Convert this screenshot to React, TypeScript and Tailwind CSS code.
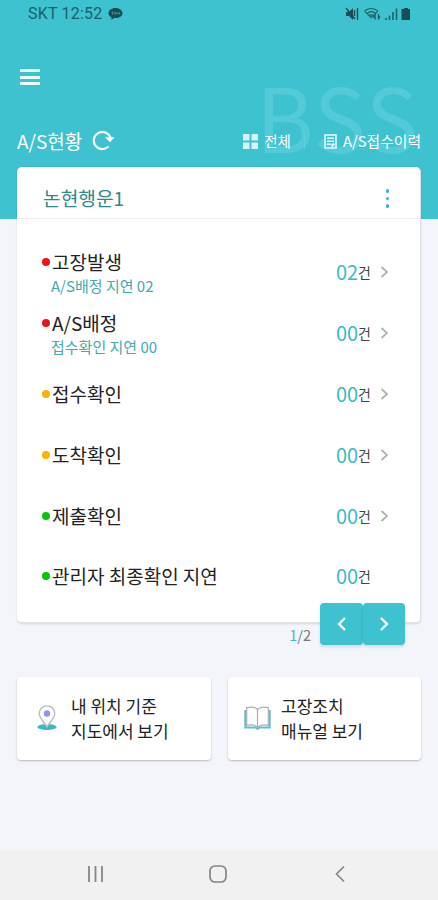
import React from 'react';

type Row = { label: string; sub?: string; count: string; dot: string; link: boolean };

const rows: Row[] = [
  { label: '고장발생', sub: 'A/S배정 지연 02', count: '02', dot: 'bg-[#e8161b]', link: true },
  { label: 'A/S배정', sub: '접수확인 지연 00', count: '00', dot: 'bg-[#e8161b]', link: true },
  { label: '접수확인', count: '00', dot: 'bg-[#fbb105]', link: true },
  { label: '도착확인', count: '00', dot: 'bg-[#fbb105]', link: true },
  { label: '제출확인', count: '00', dot: 'bg-[#0ac40a]', link: true },
  { label: '관리자 최종확인 지연', count: '00', dot: 'bg-[#0ac40a]', link: false },
];

const StatusBar = () => (
  <div className="flex h-7 items-center justify-between pl-7 pr-[27px] text-[#1c6069]">
    <div className="flex items-center gap-[6px]">
      <span className="font-['Roboto',sans-serif] text-base leading-7 tracking-[0.2px]">SKT 12:52</span>
      <svg width="15" height="14" viewBox="0 0 15 14" className="text-[#174f57]">
        <path d="M7.5 1C3.6 1 .5 3.3.5 6.2c0 2 1.3 3.5 3.2 4.3L3.2 13l3-2 1.3.1c3.9 0 7-2.2 7-4.9S11.4 1 7.5 1z" fill="currentColor" />
        <path d="M3.5 5h2M4.5 5v2.5M6.2 7.5 7.2 5l.8 2.5M9.2 5v2.4M11.3 5v2.4M9.5 6.3h2" stroke="#4f97a0" strokeWidth=".8" fill="none" />
      </svg>
    </div>
    <svg width="66" height="14" viewBox="0 0 66 14" fill="none" stroke="currentColor">
      {/* muted speaker */}
      <path d="M1 5h3l4-4v12L4 9H1z" fill="#174f57" stroke="none" />
      <path d="m1 1 9 11M9.5 3v6M12.5 1v12" stroke="#174f57" strokeWidth="1.4" />
      {/* wifi */}
      <path d="M19.5 4.2c4-3.6 9.5-3.6 13.5 0M22 6.5c2.6-2.2 6-2.2 8.5 0M24 8.7c1.5-1.1 3-1.1 4.5 0M19.5 4.2l6.8 6.5L33 4.2" strokeWidth="1.1" />
      <path d="M30 12.5v-4l-1.5 2M33.5 7v4.5l1.5-2" strokeWidth="1.4" />
      {/* signal */}
      <path d="M41 13v-2M44.5 13V8.500M48 13V5M51.5 13V1.500" strokeWidth="1.6" />
      {/* battery */}
      <path d="M59 1h4v1h2v11h-8.5V2H59z" fill="#174f57" stroke="none" />
    </svg>
  </div>
);

const Header = () => (
  <header className="relative h-[219px] bg-[#3fc2cf] text-white">
    <span className="absolute left-[256px] top-[65px] font-['Noto_Sans_CJK_KR',sans-serif] text-[88px] leading-[100px] tracking-[1px] text-[#53cad7]">
      BSS
    </span>
    <StatusBar />
    <div className="flex h-[98px] items-center pl-5">
      <div className="flex w-5 flex-col gap-[3.5px]">
        <span className="h-[3px] bg-[#e9fbfc]" />
        <span className="h-[3px] bg-[#e9fbfc]" />
        <span className="h-[3px] bg-[#e9fbfc]" />
      </div>
    </div>
    <div className="relative flex h-[30px] items-center px-[17px]">
      <h1 className="text-[19px] leading-7">A/S현황</h1>
      <svg width="23" height="22" viewBox="0 0 23 22" className="mb-[2px] ml-[10px]" fill="none">
        <path d="M16.5 17.6A8.6 8.6 0 1 1 18.6 9" stroke="currentColor" strokeWidth="2.2" />
        <path d="M12.8 8.2h9.7L18 13.3z" fill="currentColor" />
      </svg>
      <div className="ml-auto flex items-center text-[14.5px] leading-7">
        <svg width="15" height="15" viewBox="0 0 15 15" fill="#d5f4f7">
          <path d="M0 0h6.5v6.5H0zM8.5 0H15v6.5H8.5zM0 8.5h6.5V15H0zM8.5 8.5H15V15H8.5z" />
        </svg>
        <span className="ml-[6px] whitespace-nowrap">전체</span>
        <span className="ml-[13px] mr-[19px] h-4 w-px bg-[#62d0da]" />
        <svg width="13" height="15" viewBox="0 0 13 15" fill="none" stroke="#e4fafb">
          <path d="M1 1h11v13H1z" strokeWidth="1.6" />
          <path d="M3 4.3h7M3 7.3h7M3 10.3h4" strokeWidth="1.4" />
          <path d="M7.5 14V9.5H12z" fill="#e4fafb" stroke="none" />
        </svg>
        <span className="ml-[6px] whitespace-nowrap text-[14.8px]">A/S접수이력</span>
      </div>
    </div>
  </header>
);

const StatusRow = ({ row }: { row: Row }) => (
  <li className="flex h-[60.8px] items-center pl-[25px] pr-[31px]">
    <div className={row.sub ? 'flex flex-col pt-px' : 'flex flex-col'}>
      <div className="flex items-center gap-[2px]">
        <span className={`h-2 w-2 rounded-full ${row.dot}`} />
        <span className="text-[19px] leading-[26px] text-[#222]">{row.label}</span>
      </div>
      {row.sub && <span className="pl-[9px] text-[15px] leading-[22px] text-[#43aaa9]">{row.sub}</span>}
    </div>
    <div className="ml-auto flex items-center">
      <span className="text-xl leading-6 text-[#3bb9c3]">{row.count}</span>
      <span className="text-sm leading-6 text-[#444]">건</span>
      <svg width="9" height="12" viewBox="0 0 9 12" className={row.link ? 'ml-[9px]' : 'invisible ml-[9px]'} fill="none">
        <path d="m1.5 1 5.5 5-5.5 5" stroke="#b0b0b0" strokeWidth="1.7" />
      </svg>
    </div>
  </li>
);

const StatusCard = () => (
  <section className="relative mx-[17px] -mt-[52px] h-[457px] rounded-[5px] border-b-2 border-r border-[#dfe1e5] bg-white shadow-[0_0_2px_rgba(0,0,0,0.15)]">
    <div className="flex h-[52px] items-center justify-between border-b border-[#eee] pl-[26px] pr-[31px]">
      <h2 className="pt-[11px] text-[19.2px] leading-7 text-[#2c8a8a]">논현행운1</h2>
      <div className="mt-3 flex flex-col gap-[4px]">
        <span className="h-[3.5px] w-[3.5px] rounded-full bg-[#37b5c8]" />
        <span className="h-[3.5px] w-[3.5px] rounded-full bg-[#37b5c8]" />
        <span className="h-[3.5px] w-[3.5px] rounded-full bg-[#37b5c8]" />
      </div>
    </div>
    <ul className="pt-[23px]">
      {rows.map((row) => (
        <StatusRow key={row.label} row={row} />
      ))}
    </ul>
  </section>
);

const Pager = () => (
  <div className="relative -mt-[21px] flex h-[43px] justify-end pr-[33px]">
    <span className="mr-[9px] mt-[22px] text-[14.5px] leading-5 text-[#777]">
      <span className="text-[#3bb9c3]">1</span>/2
    </span>
    <button className="flex h-[42px] w-[43px] items-center justify-center rounded bg-[#3fc2cf] shadow-[0_2px_3px_rgba(0,0,0,0.12)]">
      <svg width="10" height="14" viewBox="0 0 10 14" fill="none">
        <path d="M8 1 2 7l6 6" stroke="white" strokeWidth="2.3" />
      </svg>
    </button>
    <button className="flex h-[42px] w-[42px] items-center justify-center rounded bg-[#3fc2cf] shadow-[0_2px_3px_rgba(0,0,0,0.12)]">
      <svg width="10" height="14" viewBox="0 0 10 14" fill="none">
        <path d="m2 1 6 6-6 6" stroke="white" strokeWidth="2.3" />
      </svg>
    </button>
  </div>
);

const PinIcon = () => (
  <svg width="20" height="26" viewBox="0 0 20 26" fill="none">
    <ellipse cx="10" cy="22" rx="9.7" ry="3" fill="#35b9c2" />
    <path d="M10 22C7.5 17.5 2.3 13.5 2.3 8.5a7.7 7.7 0 0 1 15.4 0c0 5-5.2 9-7.7 13.5z" fill="white" stroke="#b9b9bd" strokeWidth="1.3" />
    <circle cx="10" cy="8.5" r="3.2" fill="#9297dc" />
  </svg>
);

const BookIcon = () => (
  <svg width="27" height="24" viewBox="0 0 27 24" fill="none">
    <path d="M1.2 4v17.5h10.3l2 1.5 2-1.5h10.3V4" stroke="#5fbfc8" strokeWidth="1.8" />
    <path d="M13.5 3.5C11 1 7 .6 2.7 1.7v17.8c4.5-1 8.5-.5 10.8 1.8 2.3-2.3 6.3-2.8 10.800-1.800V1.700C20 .6 16 1 13.500 3.500zM13.500 3.500v18" fill="white" stroke="#a7adb0" strokeWidth="1.2" />
  </svg>
);

const Shortcuts = () => (
  <div className="mx-[17px] mt-[31px] flex gap-[17px] text-[17px] leading-[25px] text-[#222]">
    <button className="flex h-[83px] w-[194px] items-center rounded bg-white pb-[2px] pl-5 text-left shadow-[0_1px_2px_rgba(0,0,0,0.25)]">
      <PinIcon />
      <span className="ml-[14px] whitespace-nowrap">
        내 위치 기준
        <br />
        지도에서 보기
      </span>
    </button>
    <button className="flex h-[83px] w-[193px] items-center rounded bg-white pb-[2px] pl-4 text-left shadow-[0_1px_2px_rgba(0,0,0,0.25)]">
      <BookIcon />
      <span className="ml-[10px] whitespace-nowrap">
        고장조치
        <br />
        매뉴얼 보기
      </span>
    </button>
  </div>
);

const NavBar = () => (
  <nav className="mt-auto flex h-[50px] items-center bg-[#f1f1f1] pb-[2px] pl-[87px]">
    <svg width="17" height="18" viewBox="0 0 17 18" stroke="#858585" strokeWidth="1.8">
      <path d="M2 1v16M8.5 1v16M15 1v16" />
    </svg>
    <svg width="18" height="18" viewBox="0 0 18 18" className="ml-[105px]" fill="none" stroke="#858585" strokeWidth="1.7">
      <rect x="1" y="1" width="16" height="16" rx="5" />
    </svg>
    <svg width="10" height="18" viewBox="0 0 10 18" className="ml-[108px]" fill="none" stroke="#858585" strokeWidth="1.7">
      <path d="M9 1.5 1.5 9 9 16.5" />
    </svg>
  </nav>
);

const App = () => (
  <div className="flex h-[900px] w-[438px] flex-col overflow-hidden bg-[#f3f5fa] font-['Noto_Sans_CJK_KR',sans-serif]">
    <Header />
    <StatusCard />
    <Pager />
    <Shortcuts />
    <NavBar />
  </div>
);

export default App;
